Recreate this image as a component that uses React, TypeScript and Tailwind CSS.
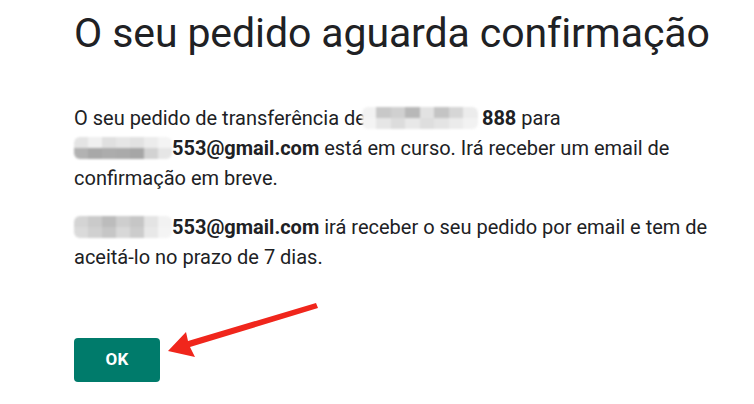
const Blur = ({ w, top, bottom }: { w: string; top: string[]; bottom: string[] }) => (
  <span className={`inline-block h-[22px] ${w} align-[-4px] overflow-hidden rounded-[6px] blur-[1px]`}>
    <span className="flex h-[11px]">
      {top.map((c, i) => (
        <span key={i} className="flex-1" style={{ background: c }} />
      ))}
    </span>
    <span className="flex h-[11px]">
      {bottom.map((c, i) => (
        <span key={i} className="flex-1" style={{ background: c }} />
      ))}
    </span>
  </span>
);

export default function App() {
  return (
    <div className="relative w-[754px] h-[404px] bg-white overflow-hidden font-['Roboto',sans-serif] text-[#202124]">
      <div className="pl-[74px] pt-[9px]">
        <h1 className="text-[41px] leading-[48px] tracking-[-0.1px]">O seu pedido aguarda confirmação</h1>

        <div className="mt-[46px] text-[20px] leading-[30px] w-[680px]">
          <p>
            O seu pedido de transferência de
            <span className="-ml-[4px] mr-[4px]">
              <Blur
                w="w-[116px]"
                top={["#f2f2f2", "#c8c8c8", "#d0d0d0", "#b8b8b8", "#e2e2e2", "#c4c4c4", "#d6d6d6", "#ececec"]}
                bottom={["#f4f4f4", "#e6e6e6", "#dcdcdc", "#e8e8e8", "#dedede", "#e4e4e4", "#ebebeb", "#f2f2f2"]}
              />
            </span>
            <b className="font-bold">888</b> para
            <br />
            <Blur
              w="w-[98px]"
              top={["#e4e4e4", "#f0f0f0", "#e0e0e0", "#e6e6e6", "#e2e2e2", "#ececec", "#f4f4f4"]}
              bottom={["#b2b2b2", "#a8a8a8", "#acacac", "#aaaaaa", "#a6a6a6", "#d2d2d2", "#e6e6e6"]}
            />
            <b className="font-bold">553@gmail.com</b> está em curso. Irá receber um email de
            <br />
            confirmação em breve.
          </p>
          <p className="mt-[19px]">
            <Blur
              w="w-[98px]"
              top={["#d4d4d4", "#cacaca", "#bcbcbc", "#cecece", "#c6c6c6", "#e4e4e4", "#f2f2f2"]}
              bottom={["#dadada", "#d0d0d0", "#c6c6c6", "#d8d8d8", "#cccccc", "#e8e8e8", "#f4f4f4"]}
            />
            <b className="font-bold">553@gmail.com</b> irá receber o seu pedido por email e tem de
            <br />
            aceitá-lo no prazo de 7 dias.
          </p>
        </div>

        <button className="mt-[66px] w-[86px] h-[44px] rounded-[4px] bg-[#007b6b] text-white text-[17px] font-bold tracking-[0.3px]">
          OK
        </button>
      </div>

      <svg className="absolute left-0 top-0" width="754" height="404" viewBox="0 0 754 404">
        <path d="M316 303 L318 308 L190 347 L195 357 L168 351 L186 332 L188 341 Z" fill="#f0261c" />
      </svg>
    </div>
  );
}
